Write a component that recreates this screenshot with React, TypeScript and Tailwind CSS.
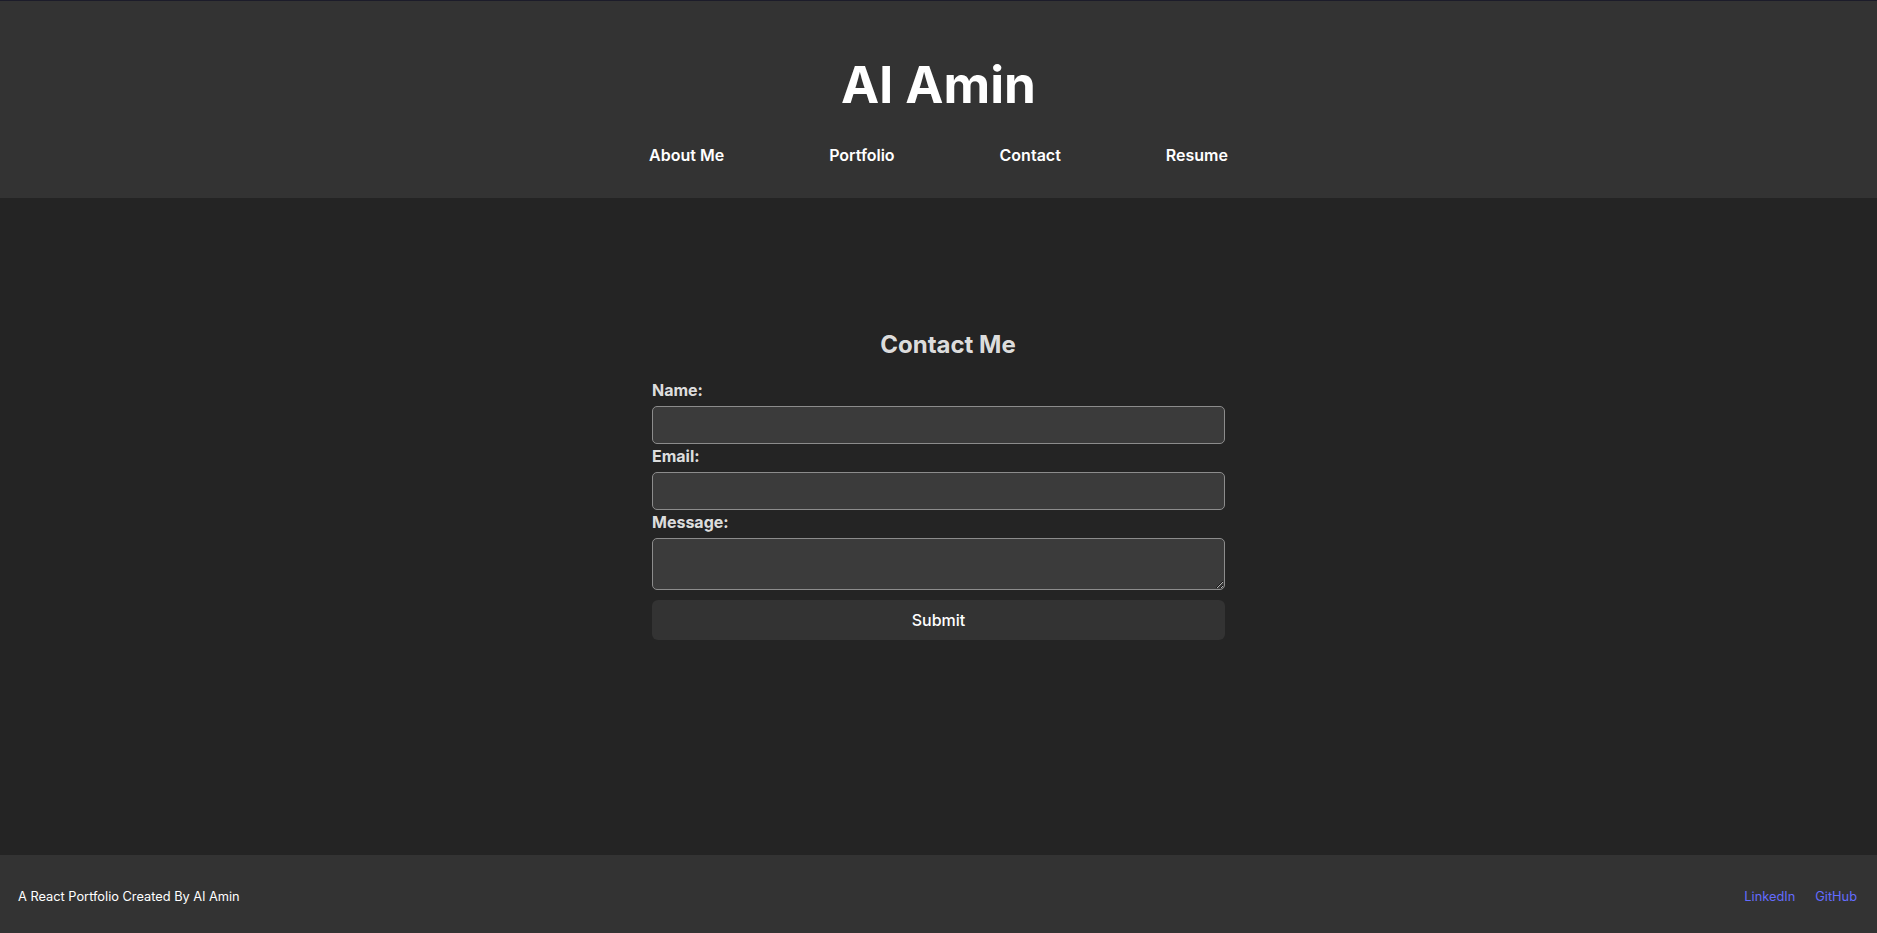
import React from "react";

const navLinks = ["About Me", "Portfolio", "Contact", "Resume"];

function Header() {
  return (
    <header className="bg-[#333333] border-t border-[#1c1c2a] pt-[55px] pb-[31px] flex flex-col items-center">
      <h1 className="text-[51.2px] leading-[1.1] font-bold text-white">Al Amin</h1>
      <nav className="mt-[31px] flex items-center gap-[105px]">
        {navLinks.map((link) => (
          <a key={link} href="#" className="text-base leading-6 font-semibold text-white">
            {link}
          </a>
        ))}
      </nav>
    </header>
  );
}

function ContactForm() {
  return (
    <section className="w-[573px] mx-auto">
      <h2 className="text-2xl leading-9 font-bold text-center text-white/[0.87] pl-[19px] mb-[15px]">Contact Me</h2>
      <form className="flex flex-col" onSubmit={(e) => e.preventDefault()}>
        <label className="text-base leading-6 font-bold text-white/[0.87] mb-1">Name:</label>
        <input
          type="text"
          className="h-[38px] rounded-[5px] border border-[#8c8c8c] bg-[#3b3b3b] px-2 text-white outline-none"
        />
        <label className="text-base leading-6 font-bold text-white/[0.87] mb-1">Email:</label>
        <input
          type="email"
          className="h-[38px] rounded-[5px] border border-[#8c8c8c] bg-[#3b3b3b] px-2 text-white outline-none"
        />
        <label className="text-base leading-6 font-bold text-white/[0.87] mb-1">Message:</label>
        <textarea className="h-[52px] rounded-[5px] border border-[#8c8c8c] bg-[#3b3b3b] px-2 text-white outline-none" />
        <button
          type="submit"
          className="mt-[10px] h-10 rounded-md bg-[#333333] text-base font-medium text-white"
        >
          Submit
        </button>
      </form>
    </section>
  );
}

function Footer() {
  return (
    <footer className="h-[78px] bg-[#333333] flex items-center justify-between pl-[18px] pr-[20px] pt-[5px]">
      <p className="text-[12.8px] text-white">A React Portfolio Created By Al Amin</p>
      <div className="flex items-center gap-5 text-[12.8px]">
        <a href="#" className="text-[#646cff]">LinkedIn</a>
        <a href="#" className="text-[#646cff]">GitHub</a>
      </div>
    </footer>
  );
}

export default function App() {
  return (
    <div className="min-h-screen flex flex-col bg-[#242424] font-['Inter',sans-serif]">
      <Header />
      <main className="flex-1 pt-[129px]">
        <ContactForm />
      </main>
      <Footer />
    </div>
  );
}
